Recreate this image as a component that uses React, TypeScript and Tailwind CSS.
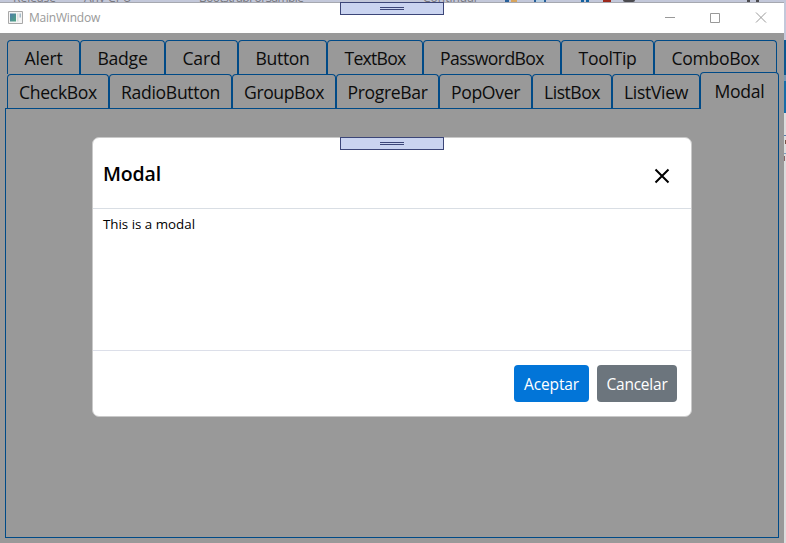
import { useLayoutEffect, useRef } from "react";

/** A single-line label whose tracking is adjusted so it fills a given width. */
function Label({ text, width, className = "" }: { text: string; width: number; className?: string }) {
  const ref = useRef<HTMLSpanElement>(null);
  useLayoutEffect(() => {
    const el = ref.current;
    if (!el) return;
    el.style.letterSpacing = "0px";
    const natural = el.getBoundingClientRect().width;
    el.style.letterSpacing = `${(width - natural) / text.length}px`;
  }, [text, width]);
  return (
    <span ref={ref} className={`inline-block whitespace-nowrap ${className}`}>
      {text}
    </span>
  );
}

type TabInfo = { name: string; tab: string; label: number };

const topTabs: TabInfo[] = [
  { name: "Alert", tab: "w-[73px]", label: 38 },
  { name: "Badge", tab: "w-[85px]", label: 50 },
  { name: "Card", tab: "w-[73px]", label: 38 },
  { name: "Button", tab: "w-[89px]", label: 54 },
  { name: "TextBox", tab: "w-[96px]", label: 61 },
  { name: "PasswordBox", tab: "w-[138px]", label: 104 },
  { name: "ToolTip", tab: "w-[93px]", label: 58 },
  { name: "ComboBox", tab: "w-[123px]", label: 88 },
];

const bottomTabs: TabInfo[] = [
  { name: "CheckBox", tab: "w-[102px]", label: 78 },
  { name: "RadioButton", tab: "w-[123px]", label: 99 },
  { name: "GroupBox", tab: "w-[104px]", label: 80 },
  { name: "ProgreBar", tab: "w-[103px]", label: 80 },
  { name: "PopOver", tab: "w-[93px]", label: 69 },
  { name: "ListBox", tab: "w-[80px]", label: 56 },
  { name: "ListView", tab: "w-[88px]", label: 64 },
];

function Tab({ item }: { item: TabInfo }) {
  return (
    <div
      className={`${item.tab} flex h-[34px] shrink-0 justify-center rounded-t-[4px] border border-b-0 border-[#004a87] text-[17.6px] leading-[34px] text-[#0c0c0c]`}
    >
      <Label text={item.name} width={item.label} />
    </div>
  );
}

function Grip() {
  return (
    <div className="flex h-[13px] w-[104px] flex-col items-center justify-center gap-px border border-[#3c4678] bg-[#cad4f0]">
      <div className="h-px w-6 bg-[#3c4678]" />
      <div className="h-px w-6 bg-[#3c4678]" />
    </div>
  );
}

function Modal() {
  return (
    <div className="absolute left-[92px] top-[137px] flex h-[280px] w-[600px] flex-col rounded-[7px] border border-[#c9c9c9] bg-white">
      <div className="flex h-[71px] shrink-0 items-center justify-between border-b border-[#d9dee4] pl-2.5 pr-5">
        <Label text="Modal" width={58} className="pt-0.5 text-[19.5px] font-semibold leading-6" />
        <svg className="mt-1.5" width="18" height="16" viewBox="0 0 18 16" fill="none" stroke="#000" strokeWidth="2">
          <path d="M2.5 1.5 15.5 14.5M15.5 1.5 2.5 14.5" />
        </svg>
      </div>
      <div className="flex-1 px-2.5 pt-1.5 text-[13.33px] leading-[19px]">
        <Label text="This is a modal" width={92} />
      </div>
      <div className="flex h-[66px] shrink-0 justify-end gap-2 border-t border-[#dcdfe9] pr-3.5 pt-3.5 text-[15.5px] leading-[39px] text-white">
        <button className="flex h-[37px] w-[75px] justify-center rounded bg-[#0275d8]">
          <Label text="Aceptar" width={55} />
        </button>
        <button className="flex h-[37px] w-[80px] justify-center rounded bg-[#6c757d]">
          <Label text="Cancelar" width={61} />
        </button>
      </div>
    </div>
  );
}

function BackgroundToolbar() {
  return (
    <div className="absolute inset-x-0 top-0 h-[3px] overflow-hidden bg-[#c3c8da] text-[12px] leading-3 text-[#77777d]">
      <span className="absolute -top-[8px] left-[13px]">Release</span>
      <span className="absolute -top-[8px] left-[84px]">Any CPU</span>
      <span className="absolute -top-[8px] left-[199px] tracking-[-0.6px]">BootstrapForSample</span>
      <span className="absolute -top-[8px] left-[423px]">Continuar</span>
      <div className="absolute left-[505px] top-0 h-[3px] w-1 bg-[#27609a]" />
      <div className="absolute left-[511px] top-0 h-[3px] w-1.5 bg-[#d7a45d]" />
      <div className="absolute left-[534px] top-0 h-[3px] w-3 border-x-2 border-[#27609a] bg-[#b4cde2]" />
      <div className="absolute left-[581px] top-0 h-[2px] w-2 border-x-[3px] border-[#1261a0]" />
      <div className="absolute left-[603px] top-0 h-[2px] w-2 bg-[#9d291c]" />
      <div className="absolute left-[623px] top-0 h-[2px] w-3 rounded-b-full border-b-2 border-[#4b4b50]" />
      <div className="absolute left-[747px] top-0 h-[2px] w-3 border-x-[3px] border-[#4b4b50]" />
      <div className="absolute bottom-0 h-px w-full bg-[#a6a8b0]" />
    </div>
  );
}

function BackgroundEdge() {
  return (
    <div className="absolute inset-y-0 right-0 flex w-[2px] flex-col overflow-hidden bg-[#dddddd]">
      <div className="h-[40px] shrink-0 bg-[#c3c8da]" />
      <div className="h-[35px] shrink-0 bg-[#0c568f]" />
      <div className="h-[6px] shrink-0 bg-[#7399b8]" />
      <div className="h-[32px] shrink-0 bg-[#176ca8]" />
      <div className="mt-[22px] h-px shrink-0 bg-[#557caa]" />
      <div className="ml-px mt-[4px] h-[4px] shrink-0 bg-[#785448]" />
      <div className="mt-[9px] h-px shrink-0 bg-[#7d9dbc]" />
      <div className="mt-[2px] h-[5px] shrink-0 border-l border-[#8b6265]" />
    </div>
  );
}

export default function App() {
  return (
    <div className="relative h-[543px] w-[786px] overflow-hidden bg-[#999999] pt-[3px] font-['Open_Sans','Noto_Sans',sans-serif] text-black">
      <BackgroundToolbar />
      <header className="flex h-[30px] w-[784px] items-center bg-white">
        <svg className="mb-px ml-2" width="15" height="13" viewBox="0 0 15 13">
          <defs>
            <linearGradient id="screen" x1="0" y1="0" x2="1" y2="1">
              <stop offset="0" stopColor="#4f7ca8" />
              <stop offset="1" stopColor="#4ca481" />
            </linearGradient>
          </defs>
          <path d="M.5.5h14v12H.5z" fill="#f5f5f5" stroke="#a8a8a8" />
          <path d="M2 2.5h6v8H2z" fill="url(#screen)" />
          <path d="M9 2.5h1.5v8H9z" fill="#dcdfdf" />
          <path d="M11.5 2.5H13v4h-1.5z" fill="#a5bcc9" />
        </svg>
        <div className="ml-1.5 text-[12px] leading-4 text-[#999999]">
          <Label text="MainWindow" width={71} />
        </div>
        <svg className="ml-auto mr-[17px]" width="102" height="12" viewBox="0 0 102 12" fill="none" stroke="#999">
          <path d="M0 5.5h10M45.5 1.5h9v9h-9z" />
          <path d="M91 .5 101 10.5M101 .5 91 10.5" />
        </svg>
      </header>
      <main className="w-[783px] pl-[5px] pt-[7px]">
        <div className="ml-0.5 flex">
          {topTabs.map((item) => (
            <Tab key={item.name} item={item} />
          ))}
        </div>
        <div className="ml-0.5 flex">
          {bottomTabs.map((item) => (
            <Tab key={item.name} item={item} />
          ))}
          <div className="z-10 -mb-px -mt-0.5 flex h-[37px] w-[79px] shrink-0 justify-center rounded-t-[4px] border border-b-0 border-[#004a87] bg-[#999999] text-[17.6px] leading-[36px] text-[#0c0c0c]">
            <Label text="Modal" width={50} />
          </div>
        </div>
        <div className="h-[430px] w-[774px] border border-[#004a87]" />
      </main>
      <BackgroundEdge />
      <Modal />
      <div className="absolute left-[340px] top-[2px]">
        <Grip />
      </div>
      <div className="absolute left-[340px] top-[137px]">
        <Grip />
      </div>
    </div>
  );
}
